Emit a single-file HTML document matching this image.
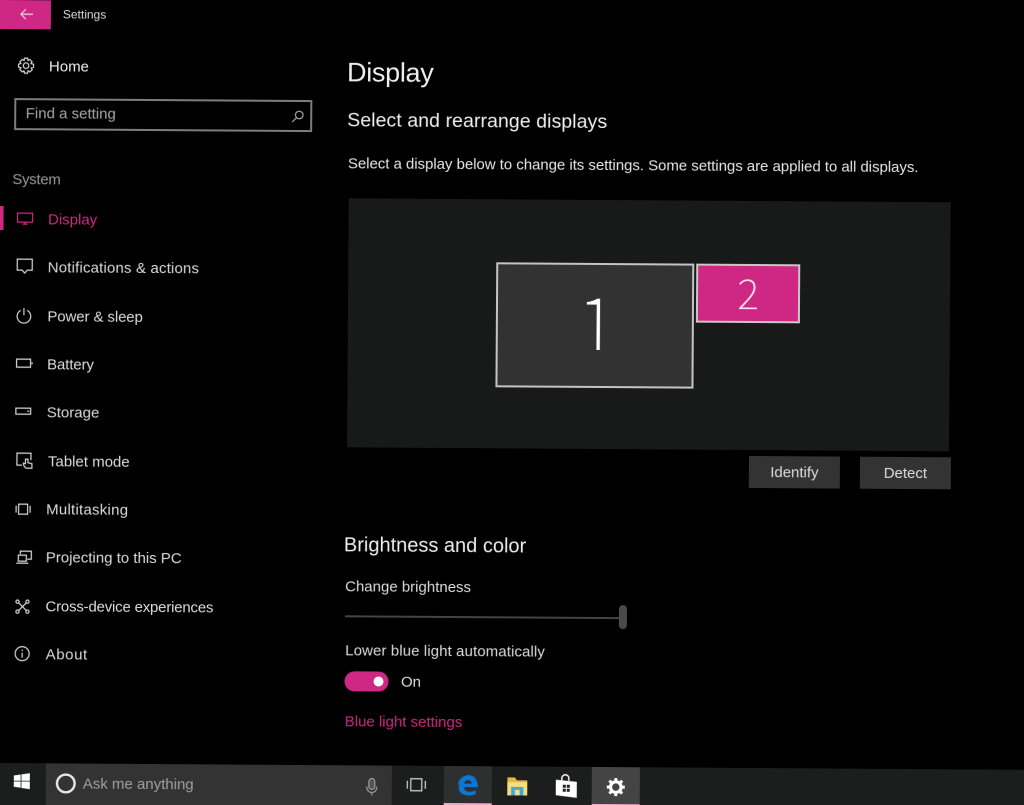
<!DOCTYPE html>
<html><head><meta charset="utf-8"><title>Settings</title>
<style>
html,body{margin:0;padding:0;background:#000;width:1024px;height:805px;overflow:hidden}
#w{position:relative;width:1024px;height:805px;overflow:hidden;background:#000}
#r{position:absolute;left:0;top:0;width:1024px;height:805px;transform-origin:0 0;transform:rotate(.38deg);filter:blur(.35px);font-family:"Liberation Sans",sans-serif;color:#e8e8e8}
.t{position:absolute;white-space:nowrap;line-height:20px;font-size:15px;height:20px}
.n{color:#dcdcdc;left:49.5px}
svg{position:absolute;overflow:visible;fill:none;stroke:#d8d8d8;stroke-width:1.2}
.b{position:absolute;background:#333;color:#ddd;font-size:15px;text-align:center;line-height:34px;width:91px;height:32px}
.k{position:absolute;top:763px;height:42px}
.d{font-family:"Noto Sans CJK JP","Liberation Sans",sans-serif;font-weight:100;text-align:center}
</style></head><body><div id="w"><div id="r">
<div style="position:absolute;left:0;top:0;width:51px;height:29px;background:#cf2884"></div>
<svg style="left:20px;top:8px" width="14" height="12" viewBox="0 0 14 12"><path d="M1 6H13M6 1L1 6L6 11" stroke="#f5d0e4" stroke-width="1.2"/></svg>
<div class="t" style="left:63px;top:4px;font-size:12px;color:#ddd">Settings</div>

<svg style="left:18px;top:57px" width="17" height="17" viewBox="0 0 17 17"><circle cx="8.5" cy="8.5" r="2.8"/><path d="M7 1H10L10.4 3.2L12.2 2.3L14.500 4.600L13.400 6.400L16 7V10L13.700 10.600L14.700 12.400L12.400 14.700L10.600 13.600L10 16H7L6.400 13.700L4.600 14.700L2.300 12.400L3.400 10.600L1 10V7L3.300 6.400L2.300 4.600L4.600 2.300L6.400 3.400Z"/></svg>
<div class="t" style="left:49.4px;top:57px;color:#eee">Home</div>
<div style="position:absolute;left:14.5px;top:98px;width:294px;height:28px;border:2px solid #7d7d7d"></div>
<div class="t" style="left:26.5px;top:104.3px;color:#a8a8a8">Find a setting</div>
<svg style="left:292px;top:108px" width="13" height="13" viewBox="0 0 13 13"><circle cx="8" cy="5" r="3.8" stroke="#aaa"/><path d="M5.2 7.8L1 12" stroke="#aaa"/></svg>
<div class="t" style="left:13.5px;top:169.7px;color:#999;letter-spacing:-.3px">System</div>

<div style="position:absolute;left:0;top:206px;width:5px;height:24px;background:#cf2884"></div>
<svg style="left:18px;top:212px" width="17" height="13" viewBox="0 0 17 13"><path d="M1 1H16V10H1ZM6 12H11M8.5 10V12" stroke="#cf2884"/></svg>
<div class="t" style="left:49.5px;top:209.7px;color:#cf2884">Display</div>

<svg style="left:18px;top:258px" width="17" height="17" viewBox="0 0 17 17"><path d="M1 1H16V12H11L8.5 15L6 12H1Z"/></svg>
<div class="t n" style="top:258.3px;letter-spacing:.17px">Notifications &amp; actions</div>
<svg style="left:18px;top:307px" width="16" height="17" viewBox="0 0 16 17"><path d="M4.700 3.200A6.800 6.800 0 1 0 11.300 3.200M8 1V8"/></svg>
<div class="t n" style="top:306.6px;letter-spacing:-.1px">Power &amp; sleep</div>
<svg style="left:18px;top:358px" width="17" height="10" viewBox="0 0 17 10"><path d="M1 1H15V9H1ZM16.500 4V6"/></svg>
<div class="t n" style="top:355px;letter-spacing:-.1px">Battery</div>
<svg style="left:18px;top:407px" width="16" height="8" viewBox="0 0 16 8"><path d="M.6 1H15.400V7H.6ZM12 4H14"/></svg>
<div class="t n" style="top:403.300px">Storage</div>
<svg style="left:19px;top:452px" width="18" height="17" viewBox="0 0 18 17"><path d="M6 13H1V1H15V8M10 16Q7 13 7.500 11L9.500 11.500V7H12V10.500L16 11.500V16Z"/></svg>
<div class="t n" style="top:451.700px;left:51px">Tablet mode</div>
<svg style="left:18px;top:503px" width="17" height="12" viewBox="0 0 17 12"><path d="M4 1H13V11H4ZM1.500 2.500V9.500M15.500 2.500V9.500"/></svg>
<div class="t n" style="top:500px;letter-spacing:.25px">Multitasking</div>
<svg style="left:19px;top:550px" width="17" height="14" viewBox="0 0 17 14"><path d="M5 4V1H16V9H12M3 5H11V11H3ZM1 13H13"/></svg>
<div class="t n" style="top:548.300px">Projecting to this PC</div>
<svg style="left:19px;top:599px" width="15" height="15" viewBox="0 0 15 15"><circle cx="2.500" cy="2.500" r="1.600"/><circle cx="12.500" cy="2.500" r="1.600"/><circle cx="2.500" cy="12.500" r="1.600"/><circle cx="12.500" cy="12.500" r="1.600"/><path d="M3.700 3.700L11.300 11.300M11.300 3.700L3.700 11.300"/></svg>
<div class="t n" style="top:596.600px;letter-spacing:-.2px">Cross-device experiences</div>
<svg style="left:19px;top:646px" width="15" height="15" viewBox="0 0 15 15"><circle cx="7.500" cy="7.500" r="7"/><path d="M7.500 6.500V11.500M7.500 3.500V5"/></svg>
<div class="t n" style="top:645px;left:50px;letter-spacing:.6px">About</div>

<div class="t" style="left:347.500px;top:55px;font-size:27px;height:30px;line-height:30px;color:#eee;letter-spacing:-.3px">Display</div>
<div class="t" style="left:348px;top:105px;font-size:19.500px;height:26px;line-height:26px;color:#f0f0f0;letter-spacing:.07px">Select and rearrange displays</div>
<div class="t" style="left:349px;top:152px;color:#e6e6e6;letter-spacing:-.035px">Select a display below to change its settings. Some settings are applied to all displays.</div>

<div style="position:absolute;left:350.300px;top:195.700px;width:602px;height:249px;background:#181a1a"></div>
<div style="position:absolute;left:498px;top:258.500px;width:194px;height:121px;background:#323232;border:2px solid #c4c4c4">
<div class="d" style="position:absolute;left:2px;top:0;width:194px;height:85px;overflow:hidden;font-size:78px;line-height:113px;color:#fff;-webkit-text-stroke:.6px #fff">1</div></div>
<div class="d" style="position:absolute;left:698px;top:258.500px;width:100px;height:55px;background:#cf2884;border:2px solid #c8c8c8;font-size:41px;line-height:51px;color:#fbe5f1;-webkit-text-stroke:.3px #fbe5f1;overflow:hidden">2</div>
<div class="b" style="left:752px;top:451px">Identify</div>
<div class="b" style="left:863px;top:451px">Detect</div>

<div class="t" style="left:347.500px;top:530px;font-size:20px;height:26px;line-height:26px;color:#eee">Brightness and color</div>
<div class="t" style="left:349px;top:575px;color:#ddd">Change brightness</div>
<div style="position:absolute;left:349px;top:613px;width:275px;height:2px;background:#444"></div>
<div style="position:absolute;left:623px;top:601px;width:8px;height:24px;background:#4a4a4a;border-radius:4px"></div>
<div class="t" style="left:349.500px;top:639px;color:#ddd;letter-spacing:.1px">Lower blue light automatically</div>
<div style="position:absolute;left:349px;top:669px;width:44px;height:20px;border-radius:10px;background:#cf2884"></div>
<div style="position:absolute;left:378px;top:674px;width:10px;height:10px;border-radius:5px;background:#fff"></div>
<div class="t" style="left:405.500px;top:669.500px;color:#ddd">On</div>
<div class="t" style="left:349.500px;top:709.500px;color:#cf2884">Blue light settings</div>

<div class="k" style="left:0;width:1030px;background:#1c1e1e"></div>
<div class="k" style="left:51px;width:346px;background:#333"></div>
<div class="k" style="left:449px;width:48px;background:#2e3030"></div>
<div class="k" style="left:597px;width:48px;background:#444"></div>
<div style="position:absolute;left:449px;top:800px;width:48px;height:5px;background:#e8a8d0"></div>
<div style="position:absolute;left:597px;top:800px;width:48px;height:5px;background:#e8a8d0"></div>
<svg style="left:19px;top:773px;stroke:none" width="16" height="16" viewBox="0 0 16 16"><path fill="#fff" d="M0 2.400L6.800 1.400V7.600H0ZM7.600 1.300L16 0V7.600H7.600ZM0 8.400H6.800V14.600L0 13.600ZM7.600 8.400H16V16L7.600 14.700Z"/></svg>
<svg style="left:60px;top:772px" width="22" height="22" viewBox="0 0 22 22"><circle cx="11" cy="11" r="8.800" stroke="#e8e8e8" stroke-width="2.400"/></svg>
<div class="t" style="left:88px;top:773.500px;color:#a0a0a0">Ask me anything</div>
<svg style="left:371px;top:775px" width="12" height="19" viewBox="0 0 12 19"><rect x="3" y="1" width="6" height="11" rx="3" stroke="#999" fill="#555"/><path d="M1 9V10A5 5 0 0 0 11 10V9M6 15V18" stroke="#999"/></svg>
<svg style="left:411px;top:775px" width="21" height="14" viewBox="0 0 21 14"><path d="M5 1H16V13H5ZM1.500 3V11M19.500 3V11"/></svg>
<svg style="left:463px;top:772px;stroke:none" width="20" height="21" viewBox="0 0 20 21"><path fill="#0c78d4" d="M0 10C1 3 6 0 11 0C16 0 20 4 20 12H6C6 17 13 18 18 15V19C11 22 1 20 1 13C1 10 2 8 4 6C3 7.500 2 8.500 0 10ZM6 8.500H14C14 4 7 4 6 8.500Z"/></svg>
<svg style="left:512px;top:774px;stroke:none" width="21" height="18" viewBox="0 0 21 19"><path fill="#e8b73c" d="M0 0H8L10 3H21V19H0Z"/><path fill="#f6dc7e" d="M0 5H21V19H0Z"/><path fill="#3fa8dc" d="M4 19V10H17V19H13V13H8V19Z"/></svg>
<svg style="left:561px;top:770px;stroke:none" width="21" height="24" viewBox="0 0 21 24"><path fill="none" stroke="#fff" stroke-width="1.400" d="M6 7V4.500A3.500 3.500 0 0 1 13 4.500V7"/><path fill="#fff" d="M0 6L21 8V24L0 21.500Z"/><path fill="#222" d="M7 11H10V14H7ZM11 11H14V14H11ZM7 15H10V18H7ZM11 15H14V18H11Z"/></svg>
<svg style="left:611px;top:773px;stroke:none" width="20" height="20" viewBox="0 0 20 20"><circle cx="10" cy="10" r="5.300" fill="none" stroke="#fff" stroke-width="3.200"/><path fill="none" stroke="#fff" stroke-width="3" d="M10 1V4M10 16V19M1 10H4M16 10H19M3.600 3.600L5.700 5.700M14.300 14.300L16.400 16.400M16.400 3.600L14.300 5.700M5.700 14.300L3.600 16.400"/></svg>
</div></div></body></html>
